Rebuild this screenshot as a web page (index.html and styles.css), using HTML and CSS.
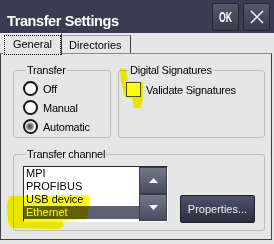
FILE: index.html
```html
<!DOCTYPE html>
<html>
<head>
<meta charset="utf-8">
<link rel="stylesheet" href="styles.css">
</head>
<body>
<div class="titlebar">
  <span class="title">Transfer Settings</span>
  <button class="tb-btn ok"><span class="ok-text">OK</span></button>
  <button class="tb-btn close">
    <svg width="14" height="14" viewBox="0 0 14 14"><path d="M1 1 L13 13 M13 1 L1 13" stroke="#fff" stroke-width="1.4" fill="none"/></svg>
  </button>
</div>
<div class="tabs">
  <div class="tab active"><span class="focus">General</span></div>
  <div class="tab inactive">Directories</div>
</div>
<div class="page">
  <div class="row">
    <fieldset class="group transfer">
      <legend>Transfer</legend>
      <div class="radio"><span class="dot"></span><span>Off</span></div>
      <div class="radio"><span class="dot"></span><span>Manual</span></div>
      <div class="radio"><span class="dot checked"></span><span>Automatic</span></div>
    </fieldset>
    <fieldset class="group sig">
      <legend>Digital Signatures</legend>
      <div class="check"><span class="box"></span><span>Validate Signatures</span></div>
    </fieldset>
  </div>
  <fieldset class="group channel">
    <legend>Transfer channel</legend>
    <div class="channel-row">
      <div class="listbox">
        <ul class="items">
          <li>MPI</li>
          <li>PROFIBUS</li>
          <li>USB device</li>
          <li class="sel">Ethernet</li>
        </ul>
        <div class="scroll">
          <button class="sb"><svg width="9" height="5" viewBox="0 0 9 5"><path d="M4.5 0 L9 5 L0 5 Z" fill="#fff"/></svg></button>
          <button class="sb"><svg width="9" height="5" viewBox="0 0 9 5"><path d="M0 0 L9 0 L4.5 5 Z" fill="#fff"/></svg></button>
        </div>
      </div>
      <button class="props">Properties...</button>
    </div>
  </fieldset>
</div>
<svg class="marker" width="274" height="244" viewBox="0 0 274 244">
  <polygon points="120,68 126,69 128,81 143,82 143,97 141,108 134,108 132,98 125,97 121,82" fill="#ffff00"/>
  <polygon points="9,196 89,195 89,206 87,219 62,221 64,226 58,229 12,228 8,222 7,205" fill="#ffff00"/>
</svg>
</body>
</html>
```
FILE: styles.css
```css
html, body {
  margin: 0;
  padding: 0;
}
body {
  width: 274px;
  height: 244px;
  background: #e6e6e6;
  font-family: "Liberation Sans", Arial, sans-serif;
  font-size: 11px;
  color: #000;
  overflow: hidden;
  position: relative;
}
.titlebar {
  height: 33px;
  box-sizing: border-box;
  background: #3b3c4f;
  display: flex;
  align-items: flex-start;
  padding: 3px 4px 0 7px;
}
.title {
  color: #fff;
  font-weight: bold;
  font-size: 14.5px;
  letter-spacing: -0.4px;
  line-height: 16px;
  margin-top: 10px;
}
.tb-btn {
  width: 27px;
  height: 28px;
  box-sizing: border-box;
  border: 1px solid #262734;
  border-radius: 2px;
  background: linear-gradient(#56586c, #393b4b);
  padding: 0;
  display: flex;
  align-items: center;
  justify-content: center;
  color: #fff;
}
.ok {
  margin-left: auto;
}
.close {
  margin-left: 4px;
}
.ok-text {
  font-family: "Liberation Sans", Arial, sans-serif;
  font-weight: bold;
  font-size: 14px;
  display: inline-block;
  transform: scaleX(0.62);
}
.tabs {
  display: flex;
  align-items: flex-start;
  height: 20px;
  padding-left: 3px;
  position: relative;
  z-index: 1;
}
.tab {
  box-sizing: border-box;
  font-size: 11px;
}
.tab.active {
  width: 59px;
  height: 22px;
  border-top: 1px solid #fff;
  border-left: 1px solid #fff;
  border-right: 1px solid #404040;
  background: #e6e6e6;
  padding: 1px 0 1px 0;
}
.focus {
  display: block;
  box-sizing: border-box;
  height: 20px;
  border: 1px dotted #000;
  text-align: center;
  line-height: 17px;
}
.tab.inactive {
  width: 69px;
  height: 18px;
  margin-top: 2px;
  border-top: 1px solid #a0a0a0;
  border-right: 1px solid #404040;
  padding: 1px 0 0 7px;
  line-height: 16px;
}
.page {
  width: 272px;
  height: 187px;
  box-sizing: border-box;
  border: 1px solid #404040;
  border-top-color: #8a8a8a;
  padding: 10px 6px 0 12px;
}
.row {
  display: flex;
  gap: 7px;
}
.group {
  margin: 0;
  padding: 0;
  border: 1px solid #bcbcbc;
  border-radius: 3px;
  min-width: 0;
}
.group legend {
  padding: 0 1px;
  margin-left: 3px;
  line-height: 13px;
  letter-spacing: -0.25px;
}
.transfer {
  width: 98px;
  box-sizing: border-box;
  padding: 2px 0 1px 9px;
}
.sig {
  width: 147px;
  box-sizing: border-box;
  padding: 5px 0 0 7px;
}
.radio {
  height: 19px;
  display: flex;
  align-items: center;
  letter-spacing: -0.25px;
}
.dot {
  width: 15px;
  height: 15px;
  box-sizing: border-box;
  border: 2px solid #161616;
  border-radius: 50%;
  background: #fff;
  margin-right: 5px;
  flex: none;
}
.dot.checked {
  background: radial-gradient(circle at 45% 50%, #3a3a3a 0, #8a8a8a 3px, #c4c4c4 4px, #fff 4.6px);
}
.check {
  display: flex;
  align-items: center;
  letter-spacing: -0.25px;
}
.box {
  width: 15px;
  height: 15px;
  box-sizing: border-box;
  border: 1px solid #505050;
  background: #fff;
  margin-right: 5px;
  flex: none;
}
.channel {
  margin-top: 10px;
  padding: 5px 0 7px 9px;
}
.channel-row {
  display: flex;
  align-items: flex-start;
}
.listbox {
  width: 145px;
  height: 56px;
  box-sizing: border-box;
  border: 1px solid;
  border-color: #2a2a2a #fff #fff #2a2a2a;
  background: #fff;
  display: flex;
}
.items {
  list-style: none;
  margin: 0;
  padding: 0;
  flex: 1;
}
.items li {
  height: 13px;
  line-height: 13px;
  padding-left: 2px;
}
.items li.sel {
  background: #5f6071;
  color: #fff;
}
.scroll {
  width: 28px;
  display: flex;
  flex-direction: column;
}
.sb {
  height: 27px;
  box-sizing: border-box;
  margin: 0;
  padding: 0;
  border: 1px solid #3c3d4e;
  background: linear-gradient(#74768a, #4a4c5e);
  display: flex;
  align-items: center;
  justify-content: center;
}
.props {
  width: 75px;
  height: 28px;
  margin: 29px 0 0 12px;
  box-sizing: border-box;
  border: 1px solid #1e1f2a;
  border-radius: 2px;
  background: linear-gradient(#50526a, #2b2d3d);
  color: #f0f0f4;
  font-family: "Liberation Sans", Arial, sans-serif;
  font-size: 11px;
  padding: 0;
}
.marker {
  position: absolute;
  left: 0;
  top: 0;
  pointer-events: none;
  mix-blend-mode: multiply;
}
```
